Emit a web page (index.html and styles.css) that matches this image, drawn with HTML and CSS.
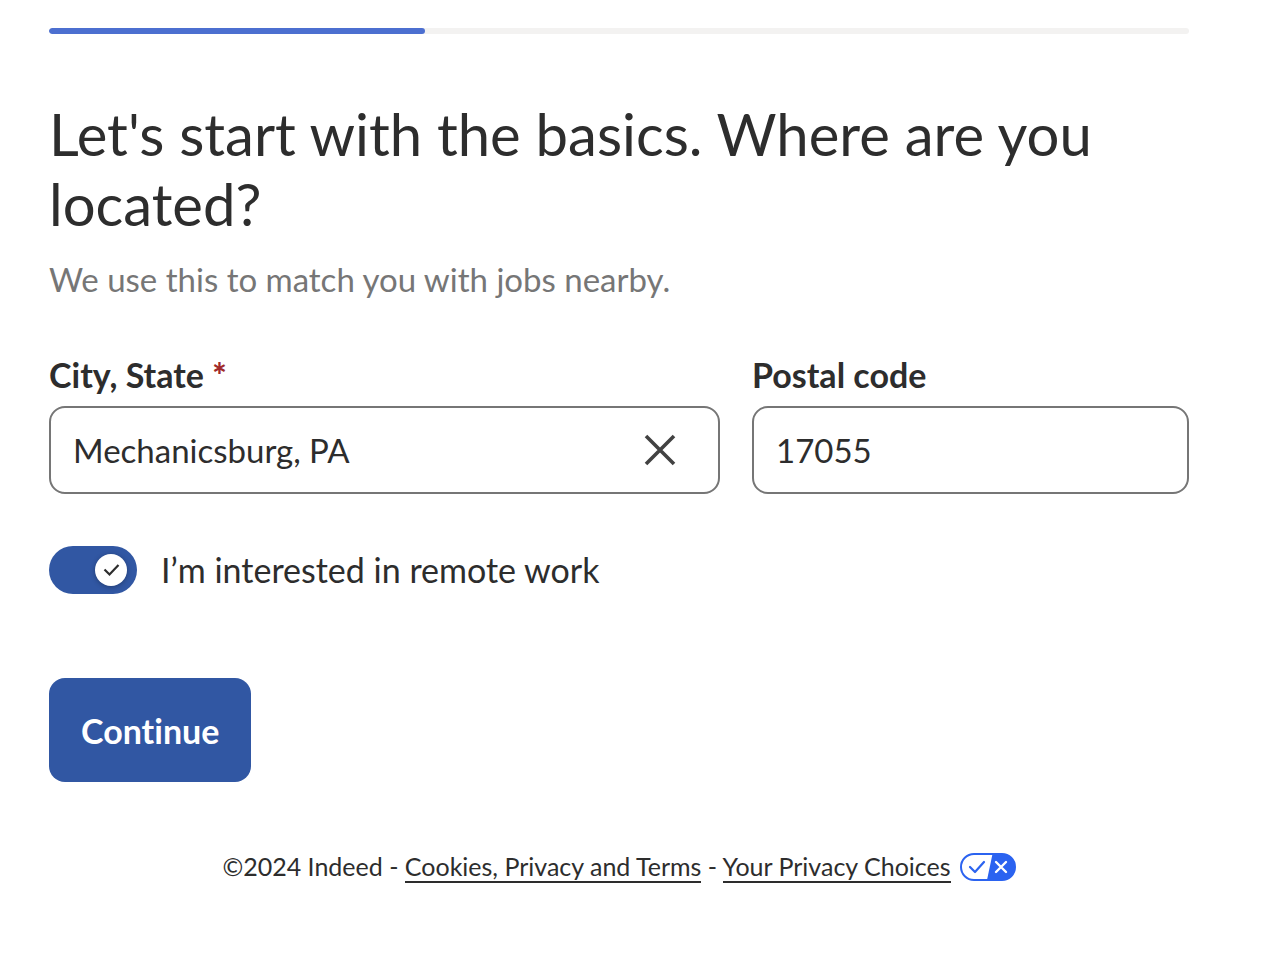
FILE: index.html
```html
<!DOCTYPE html>
<html lang="en">
<head>
<meta charset="utf-8">
<meta name="viewport" content="width=device-width, initial-scale=1">
<title>Your location</title>
<link rel="stylesheet" href="styles.css">
</head>
<body>
<main class="page">
  <div class="progress" role="progressbar" aria-label="Profile progress" aria-valuemin="0" aria-valuemax="100" aria-valuenow="33"><div class="progress-fill"></div></div>
  <h1 class="title">Let's start with the basics. Where are you located?</h1>
  <p class="subtitle">We use this to match you with jobs nearby.</p>
  <form class="form">
    <div class="fields">
      <div class="field">
        <label class="label" for="city">City, State <span class="required">*</span></label>
        <div class="control">
          <input class="input" id="city" type="text" value="Mechanicsburg, PA" required>
          <button class="clear" type="button" aria-label="Clear">
            <svg class="clear-icon" viewBox="0 0 32 32" fill="none" stroke="currentColor" stroke-width="3.6"><path d="M2 2 30 30M30 2 2 30"/></svg>
          </button>
        </div>
      </div>
      <div class="field">
        <label class="label" for="postal">Postal code</label>
        <div class="control"><input class="input" id="postal" type="text" value="17055"></div>
      </div>
    </div>
    <label class="remote" for="remote">
      <span class="switch">
        <input class="switch-input" id="remote" type="checkbox" role="switch" checked>
        <svg class="switch-check" viewBox="0 0 32 32" fill="none" stroke="currentColor" stroke-width="2.2"><path d="m9.5 15.5 5 5 9-9.5"/></svg>
      </span>
      <span class="remote-text">I’m interested in remote work</span>
    </label>
    <button class="continue" type="submit">Continue</button>
  </form>
  <footer class="footer">
    <span>©2024 Indeed - <a class="link" href="#terms">Cookies, Privacy and Terms</a> - <a class="link" href="#choices">Your Privacy Choices</a></span>
    <svg class="privacy" viewBox="0 0 56 28" aria-hidden="true"><rect x="1" y="1" width="54" height="26" rx="13" fill="#fff" stroke="#2b63f0" stroke-width="2"/><path d="M32.500 1H42a13 13 0 0 1 0 26H27z" fill="#2b63f0"/><path d="m10 14 5 5 9-10" fill="none" stroke="#2b63f0" stroke-width="2.200" stroke-linecap="round" stroke-linejoin="round"/><path d="m36 9 10 10M46 9 36 19" stroke="#fff" stroke-width="2.400" stroke-linecap="round"/></svg>
  </footer>
</main>
</body>
</html>
```
FILE: styles.css
```css
* { box-sizing: border-box; }
body { margin: 0; background: #fff; color: #2d2d2d; font-family: Lato, "Noto Sans", sans-serif; font-variant-ligatures: none; }
.page { padding: 28px 77px 80px 49px; }
.progress { height: 6px; border-radius: 3px; background: #f3f2f1; overflow: hidden; }
.progress-fill { width: 33%; height: 100%; border-radius: 3px; background: #4c6fd0; }
.title { margin: 65px 0 0; font-size: 58px; line-height: 70px; font-weight: 400; }
.subtitle { margin: 16px 0 0; font-size: 33px; line-height: 48px; color: #767676; }
.fields { display: grid; grid-template-columns: 671fr 437fr; gap: 32px; margin-top: 48px; }
.label { display: block; margin-bottom: 7px; font-size: 34px; line-height: 48px; font-weight: 700; }
.required { color: #a02a2a; font-weight: 900; }
.control { position: relative; }
.input { display: block; width: 100%; height: 88px; padding: 0 22px; border: 2px solid #767676; border-radius: 16px; background: #fff; color: #2d2d2d; font: inherit; font-size: 33px; font-variant-ligatures: none; }
.clear { position: absolute; top: 24px; right: 40px; width: 40px; height: 40px; padding: 4px; border: 0; background: none; color: #424242; }
.clear-icon { display: block; width: 32px; height: 32px; }
.remote { display: flex; align-items: center; gap: 24px; width: max-content; margin-top: 52px; font-size: 34px; line-height: 48px; }
.switch { position: relative; width: 88px; height: 48px; }
.switch-input { appearance: none; display: block; width: 88px; height: 48px; margin: 0; border-radius: 24px; background: #3157a3; }
.switch-check { position: absolute; top: 8px; right: 10px; width: 32px; height: 32px; border-radius: 50%; background: #fff; box-shadow: 0 1px 5px rgba(0, 0, 0, .3); }
.continue { display: block; height: 104px; margin-top: 84px; padding: 0 32px; border: 0; border-radius: 16px; background: #3157a3; color: #fff; font: inherit; font-size: 34px; font-weight: 700; font-variant-ligatures: none; }
.footer { display: flex; justify-content: center; align-items: center; gap: 9px; margin-top: 67px; font-size: 25px; line-height: 34px; }
.link { color: inherit; text-decoration: none; border-bottom: 2px solid currentColor; }
.privacy { width: 56px; height: 28px; margin-top: 2px; }
```
